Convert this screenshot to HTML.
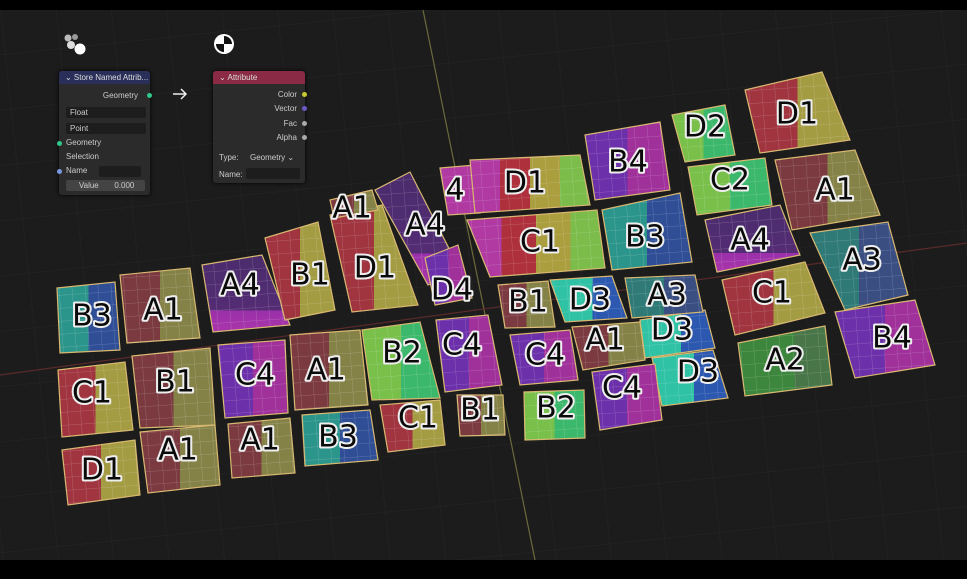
<!DOCTYPE html><html><head><meta charset="utf-8"><style>
html,body{margin:0;padding:0;background:#000;}
#w{position:relative;width:967px;height:579px;overflow:hidden;background:#000;font-family:"Liberation Sans",sans-serif;}
svg{position:absolute;left:0;top:0}
.lb text{font-family:"DejaVu Sans","Liberation Sans",sans-serif;font-size:30px;text-anchor:middle;dominant-baseline:central}
.halo text{fill:#eee;stroke:#eee;stroke-width:4;stroke-linejoin:round}
.ink text{fill:#0a0a0a}
.t{stroke:#d8b870;stroke-width:1.2}
.node{position:absolute;background:#2b2b2b;border-radius:3px;box-shadow:0 0 4px #000;font-size:8px;color:#ccc}
.hd{height:13px;line-height:13px;padding-left:6px;color:#ddd;border-radius:3px 3px 0 0}
.row{position:absolute;font-size:8px;color:#ccc}
.dot{position:absolute;width:5px;height:5px;border-radius:50%}
.dd{position:absolute;background:#1d1d1d;border-radius:2px;height:11px;line-height:11px;padding-left:4px;font-size:8px;color:#ccc}
</style></head><body><div id="w">
<svg width="967" height="579" viewBox="0 0 967 579">
<defs>
<linearGradient id="RY"><stop offset="0" stop-color="#a0343f"/><stop offset=".5" stop-color="#a0343f"/><stop offset=".5" stop-color="#a49c42"/><stop offset="1" stop-color="#a49c42"/></linearGradient>
<linearGradient id="RYd"><stop offset="0" stop-color="#7a3a40"/><stop offset=".5" stop-color="#7a3a40"/><stop offset=".5" stop-color="#858248"/><stop offset="1" stop-color="#858248"/></linearGradient>
<linearGradient id="MRYG"><stop offset="0" stop-color="#b03aa2"/><stop offset=".25" stop-color="#b03aa2"/><stop offset=".25" stop-color="#ad303c"/><stop offset=".5" stop-color="#ad303c"/><stop offset=".5" stop-color="#aa9e3e"/><stop offset=".75" stop-color="#aa9e3e"/><stop offset=".75" stop-color="#7cbc4a"/><stop offset="1" stop-color="#7cbc4a"/></linearGradient>
<linearGradient id="RYG"><stop offset="0" stop-color="#a0343f"/><stop offset=".4" stop-color="#a0343f"/><stop offset=".4" stop-color="#a49c42"/><stop offset=".8" stop-color="#a49c42"/><stop offset=".8" stop-color="#70b848"/><stop offset="1" stop-color="#70b848"/></linearGradient>
<linearGradient id="TB"><stop offset="0" stop-color="#2c958b"/><stop offset=".5" stop-color="#2c958b"/><stop offset=".5" stop-color="#2f4e96"/><stop offset="1" stop-color="#2f4e96"/></linearGradient>
<linearGradient id="TBd"><stop offset="0" stop-color="#2f7a76"/><stop offset=".5" stop-color="#2f7a76"/><stop offset=".5" stop-color="#3a4e82"/><stop offset="1" stop-color="#3a4e82"/></linearGradient>
<linearGradient id="T"><stop offset="0" stop-color="#2fc2a4"/><stop offset=".55" stop-color="#2fc2a4"/><stop offset=".55" stop-color="#2c58b0"/><stop offset="1" stop-color="#2c58b0"/></linearGradient>
<linearGradient id="PM"><stop offset="0" stop-color="#6c30aa"/><stop offset=".5" stop-color="#6c30aa"/><stop offset=".5" stop-color="#a0309a"/><stop offset="1" stop-color="#a0309a"/></linearGradient>
<linearGradient id="P" x2="0" y2="1"><stop offset="0" stop-color="#4a2c6c"/><stop offset=".72" stop-color="#542c74"/><stop offset=".72" stop-color="#9a30aa"/><stop offset="1" stop-color="#aa35aa"/></linearGradient>
<linearGradient id="G"><stop offset="0" stop-color="#78c04a"/><stop offset=".5" stop-color="#78c04a"/><stop offset=".5" stop-color="#3cb86c"/><stop offset="1" stop-color="#3cb86c"/></linearGradient>
<linearGradient id="Gd"><stop offset="0" stop-color="#3d863d"/><stop offset=".6" stop-color="#3d863d"/><stop offset=".6" stop-color="#487648"/><stop offset="1" stop-color="#487648"/></linearGradient>
<pattern id="grid" width="55" height="55" patternUnits="userSpaceOnUse" patternTransform="rotate(-6)"><path d="M55 0V55H0" fill="none" stroke="#262626" stroke-width="1"/></pattern>
<pattern id="cells" width="13" height="13" patternUnits="userSpaceOnUse" patternTransform="rotate(-4)"><path d="M13 0V13H0" fill="none" stroke="#ffffff" stroke-opacity=".22" stroke-width="1"/></pattern>
<clipPath id="cp">
<polygon points="440,168 475,165 480,213 448,215"/><polygon points="470,160 580,155 590,205 475,213"/><polygon points="585,135 660,122 670,190 595,200"/><polygon points="672,115 725,105 735,155 685,162"/><polygon points="745,90 822,72 850,140 760,153"/><polygon points="688,167 765,158 772,205 697,215"/><polygon points="775,160 855,150 880,215 792,230"/><polygon points="467,220 597,210 605,268 490,277"/><polygon points="602,210 680,193 692,262 612,270"/><polygon points="705,220 780,205 800,255 717,272"/><polygon points="810,233 888,222 908,295 845,310"/><polygon points="722,280 805,262 825,313 735,335"/><polygon points="835,312 915,300 935,365 855,378"/><polygon points="738,343 825,326 832,385 745,396"/><polygon points="652,358 713,350 728,398 662,406"/><polygon points="640,320 705,310 715,348 645,358"/><polygon points="625,278 695,275 703,312 632,318"/><polygon points="550,280 612,276 627,318 565,322"/><polygon points="498,285 548,281 555,327 505,328"/><polygon points="572,327 640,322 645,360 583,370"/><polygon points="510,335 570,330 578,380 520,385"/><polygon points="592,372 655,364 662,420 600,430"/><polygon points="524,392 584,390 585,438 525,440"/><polygon points="457,395 503,395 505,435 460,436"/><polygon points="436,320 488,315 502,385 445,392"/><polygon points="362,330 420,322 440,398 372,400"/><polygon points="380,405 440,400 445,445 388,452"/><polygon points="302,415 370,410 378,460 305,466"/><polygon points="228,424 290,418 295,473 232,478"/><polygon points="140,432 215,425 220,485 148,493"/><polygon points="62,450 135,440 140,495 68,505"/><polygon points="58,370 125,362 133,430 62,437"/><polygon points="132,356 210,348 215,425 140,428"/><polygon points="218,345 285,340 288,413 225,418"/><polygon points="290,335 360,330 368,405 295,410"/><polygon points="57,288 115,282 120,350 60,353"/><polygon points="120,275 190,268 200,338 127,343"/><polygon points="202,265 262,255 290,325 213,332"/><polygon points="265,238 318,222 335,310 285,320"/><polygon points="330,215 382,205 418,305 352,312"/><polygon points="330,200 372,190 378,210 334,218"/><polygon points="375,190 410,172 460,270 428,285"/><polygon points="425,258 458,245 472,298 435,305"/>
</clipPath>
</defs>
<rect x="0" y="10" width="967" height="550" fill="#1c1c1c"/>
<rect x="0" y="10" width="967" height="550" fill="url(#grid)"/>
<line x1="423" y1="10" x2="535" y2="560" stroke="#6b6a3c" stroke-width="1.2"/>
<line x1="0" y1="375" x2="967" y2="243" stroke="#5a2a2a" stroke-width="1.2"/>
<g class="t">
<polygon points="440,168 475,165 480,213 448,215" fill="#b03aa2"/>
<polygon points="470,160 580,155 590,205 475,213" fill="url(#MRYG)"/>
<polygon points="585,135 660,122 670,190 595,200" fill="url(#PM)"/>
<polygon points="672,115 725,105 735,155 685,162" fill="url(#G)"/>
<polygon points="745,90 822,72 850,140 760,153" fill="url(#RY)"/>
<polygon points="688,167 765,158 772,205 697,215" fill="url(#G)"/>
<polygon points="775,160 855,150 880,215 792,230" fill="url(#RYd)"/>
<polygon points="467,220 597,210 605,268 490,277" fill="url(#MRYG)"/>
<polygon points="602,210 680,193 692,262 612,270" fill="url(#TB)"/>
<polygon points="705,220 780,205 800,255 717,272" fill="url(#P)"/>
<polygon points="810,233 888,222 908,295 845,310" fill="url(#TBd)"/>
<polygon points="722,280 805,262 825,313 735,335" fill="url(#RY)"/>
<polygon points="835,312 915,300 935,365 855,378" fill="url(#PM)"/>
<polygon points="738,343 825,326 832,385 745,396" fill="url(#Gd)"/>
<polygon points="652,358 713,350 728,398 662,406" fill="url(#T)"/>
<polygon points="640,320 705,310 715,348 645,358" fill="url(#T)"/>
<polygon points="625,278 695,275 703,312 632,318" fill="url(#TBd)"/>
<polygon points="550,280 612,276 627,318 565,322" fill="url(#T)"/>
<polygon points="498,285 548,281 555,327 505,328" fill="url(#RYd)"/>
<polygon points="572,327 640,322 645,360 583,370" fill="url(#RYd)"/>
<polygon points="510,335 570,330 578,380 520,385" fill="url(#PM)"/>
<polygon points="592,372 655,364 662,420 600,430" fill="url(#PM)"/>
<polygon points="524,392 584,390 585,438 525,440" fill="url(#G)"/>
<polygon points="457,395 503,395 505,435 460,436" fill="url(#RYd)"/>
<polygon points="436,320 488,315 502,385 445,392" fill="url(#PM)"/>
<polygon points="362,330 420,322 440,398 372,400" fill="url(#G)"/>
<polygon points="380,405 440,400 445,445 388,452" fill="url(#RY)"/>
<polygon points="302,415 370,410 378,460 305,466" fill="url(#TB)"/>
<polygon points="228,424 290,418 295,473 232,478" fill="url(#RYd)"/>
<polygon points="140,432 215,425 220,485 148,493" fill="url(#RYd)"/>
<polygon points="62,450 135,440 140,495 68,505" fill="url(#RY)"/>
<polygon points="58,370 125,362 133,430 62,437" fill="url(#RY)"/>
<polygon points="132,356 210,348 215,425 140,428" fill="url(#RYd)"/>
<polygon points="218,345 285,340 288,413 225,418" fill="url(#PM)"/>
<polygon points="290,335 360,330 368,405 295,410" fill="url(#RYd)"/>
<polygon points="57,288 115,282 120,350 60,353" fill="url(#TB)"/>
<polygon points="120,275 190,268 200,338 127,343" fill="url(#RYd)"/>
<polygon points="202,265 262,255 290,325 213,332" fill="url(#P)"/>
<polygon points="265,238 318,222 335,310 285,320" fill="url(#RY)"/>
<polygon points="330,215 382,205 418,305 352,312" fill="url(#RY)"/>
<polygon points="330,200 372,190 378,210 334,218" fill="url(#RYd)"/>
<polygon points="375,190 410,172 460,270 428,285" fill="url(#P)"/>
<polygon points="425,258 458,245 472,298 435,305" fill="url(#PM)"/>
</g>
<rect x="0" y="0" width="967" height="579" fill="url(#cells)" clip-path="url(#cp)"/>
<g id="labels" class="lb halo">
<text x="455" y="190">4</text><text x="525" y="183">D1</text><text x="628" y="162">B4</text>
<text x="705" y="127">D2</text><text x="797" y="114">D1</text><text x="730" y="180">C2</text>
<text x="835" y="190">A1</text><text x="540" y="242">C1</text><text x="645" y="237">B3</text>
<text x="750" y="240">A4</text><text x="862" y="260">A3</text><text x="772" y="293">C1</text>
<text x="892" y="338">B4</text><text x="785" y="360">A2</text><text x="698" y="372">D3</text>
<text x="672" y="330">D3</text><text x="667" y="295">A3</text><text x="590" y="300">D3</text>
<text x="528" y="302">B1</text><text x="605" y="340">A1</text><text x="545" y="355">C4</text>
<text x="622" y="388">C4</text><text x="556" y="408">B2</text><text x="480" y="410">B1</text>
<text x="462" y="345">C4</text><text x="402" y="353">B2</text><text x="418" y="418">C1</text>
<text x="338" y="437">B3</text><text x="260" y="440">A1</text><text x="178" y="450">A1</text>
<text x="102" y="470">D1</text><text x="92" y="393">C1</text><text x="175" y="382">B1</text>
<text x="255" y="375">C4</text><text x="326" y="370">A1</text><text x="92" y="316">B3</text>
<text x="163" y="310">A1</text><text x="240" y="285">A4</text><text x="310" y="275">B1</text>
<text x="375" y="268">D1</text><text x="352" y="208">A1</text><text x="425" y="225">A4</text>
<text x="452" y="290">D4</text>
</g>
<g class="lb ink">
<text x="455" y="190">4</text><text x="525" y="183">D1</text><text x="628" y="162">B4</text>
<text x="705" y="127">D2</text><text x="797" y="114">D1</text><text x="730" y="180">C2</text>
<text x="835" y="190">A1</text><text x="540" y="242">C1</text><text x="645" y="237">B3</text>
<text x="750" y="240">A4</text><text x="862" y="260">A3</text><text x="772" y="293">C1</text>
<text x="892" y="338">B4</text><text x="785" y="360">A2</text><text x="698" y="372">D3</text>
<text x="672" y="330">D3</text><text x="667" y="295">A3</text><text x="590" y="300">D3</text>
<text x="528" y="302">B1</text><text x="605" y="340">A1</text><text x="545" y="355">C4</text>
<text x="622" y="388">C4</text><text x="556" y="408">B2</text><text x="480" y="410">B1</text>
<text x="462" y="345">C4</text><text x="402" y="353">B2</text><text x="418" y="418">C1</text>
<text x="338" y="437">B3</text><text x="260" y="440">A1</text><text x="178" y="450">A1</text>
<text x="102" y="470">D1</text><text x="92" y="393">C1</text><text x="175" y="382">B1</text>
<text x="255" y="375">C4</text><text x="326" y="370">A1</text><text x="92" y="316">B3</text>
<text x="163" y="310">A1</text><text x="240" y="285">A4</text><text x="310" y="275">B1</text>
<text x="375" y="268">D1</text><text x="352" y="208">A1</text><text x="425" y="225">A4</text>
<text x="452" y="290">D4</text>
</g>
<circle cx="68" cy="38" r="3.5" fill="#bbb"/><circle cx="75" cy="37" r="3" fill="#999"/><circle cx="71" cy="45" r="4" fill="#ddd"/><circle cx="80" cy="49" r="5.5" fill="#fff"/>
<circle cx="224" cy="44" r="10" fill="#fff"/><path d="M224 44V36A8 8 0 0 1 232 44Z M224 44H216A8 8 0 0 0 224 52Z" fill="#111"/>
<path d="M173 94H186M181 89L186 94L181 99" fill="none" stroke="#eee" stroke-width="1.5"/>
</svg>
<div class="node" style="left:59px;top:71px;width:91px;height:124px">
<div class="hd" style="background:#2a2f5a">⌄ Store Named Attrib...</div>
<div class="row" style="right:12px;top:20px">Geometry</div><div class="dot" style="right:-2px;top:22px;background:#2ec98a"></div>
<div class="dd" style="left:7px;top:36px;width:76px">Float</div>
<div class="dd" style="left:7px;top:52px;width:76px">Point</div>
<div class="dot" style="left:-2px;top:70px;background:#2ec98a"></div><div class="row" style="left:7px;top:67px">Geometry</div>
<div class="row" style="left:7px;top:81px">Selection</div>
<div class="dot" style="left:-2px;top:98px;background:#7a9ae0"></div><div class="row" style="left:7px;top:95px">Name</div>
<div class="dd" style="left:40px;top:95px;width:38px"></div>
<div class="dd" style="left:7px;top:109px;width:75px;background:#444">&nbsp;&nbsp;&nbsp;&nbsp;Value&nbsp;&nbsp;&nbsp;&nbsp;&nbsp;&nbsp;&nbsp;0.000</div>
</div>
<div class="node" style="left:213px;top:71px;width:92px;height:112px">
<div class="hd" style="background:#8a2a44">⌄ Attribute</div>
<div class="row" style="right:8px;top:19px">Color</div><div class="dot" style="right:-2px;top:21px;background:#c8c830"></div>
<div class="row" style="right:8px;top:33px">Vector</div><div class="dot" style="right:-2px;top:35px;background:#6a5ac8"></div>
<div class="row" style="right:8px;top:48px">Fac</div><div class="dot" style="right:-2px;top:50px;background:#aaa"></div>
<div class="row" style="right:8px;top:62px">Alpha</div><div class="dot" style="right:-2px;top:64px;background:#aaa"></div>
<div class="row" style="left:6px;top:82px">Type:</div><div class="dd" style="left:33px;top:81px;width:50px;background:#2b2b2b">Geometry ⌄</div>
<div class="row" style="left:6px;top:99px">Name:</div><div class="dd" style="left:33px;top:97px;width:50px"></div>
</div>
</div></body></html>
